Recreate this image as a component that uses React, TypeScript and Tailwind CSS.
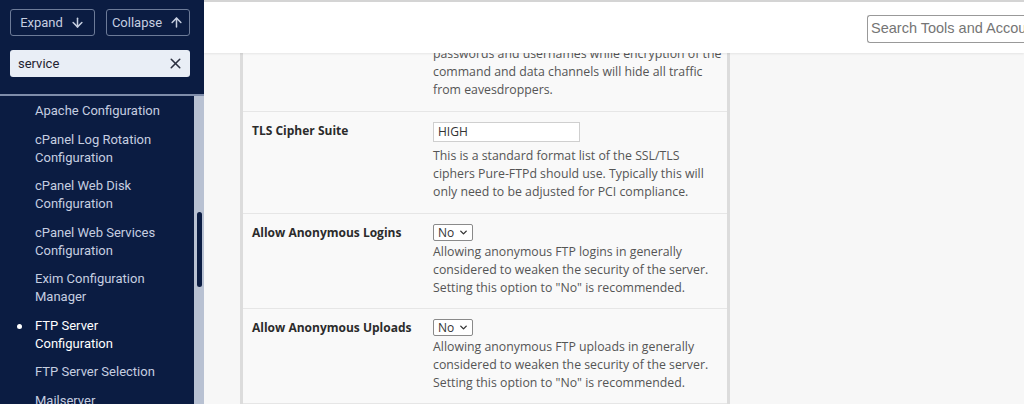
import { ArrowDown, ArrowUp, X, ChevronDown } from 'lucide-react';

const navItems: { lines: string[]; active?: boolean }[] = [
  { lines: ['Apache Configuration'] },
  { lines: ['cPanel Log Rotation', 'Configuration'] },
  { lines: ['cPanel Web Disk', 'Configuration'] },
  { lines: ['cPanel Web Services', 'Configuration'] },
  { lines: ['Exim Configuration', 'Manager'] },
  { lines: ['FTP Server', 'Configuration'], active: true },
  { lines: ['FTP Server Selection'] },
  { lines: ['Mailserver', 'Configuration'] },
];

function Sidebar() {
  return (
    <aside className="w-[204px] h-full flex flex-col bg-[#0b1c42] font-['Roboto',sans-serif] shrink-0">
      {/* Expand / collapse + filter */}
      <div className="h-[96px] border-b-2 border-[#7f8daa] px-[10px] pt-[9px]">
        <div className="flex gap-[11px]">
          <button className="w-[85px] h-[27px] flex items-center justify-center gap-[7px] rounded-[3px] border border-[#6d7b98] text-[13px] text-[#c6cee0]">
            Expand
            <ArrowDown size={15} strokeWidth={2.4} />
          </button>
          <button className="w-[84px] h-[27px] flex items-center justify-center gap-[7px] rounded-[3px] border border-[#6d7b98] text-[13px] text-[#c6cee0]">
            Collapse
            <ArrowUp size={15} strokeWidth={2.4} />
          </button>
        </div>
        <div className="mt-[14px] h-[27px] w-[180px] flex items-center justify-between rounded-[3px] bg-[#e9eef6] pl-[8px] pr-[6px]">
          <span className="text-[13px] text-[#1f2330]">service</span>
          <X size={17} strokeWidth={2.2} className="text-[#2b3040]" />
        </div>
      </div>

      {/* Nav list + scrollbar */}
      <div className="flex-1 flex min-h-0">
        <ul className="flex-1 overflow-hidden pt-[1px]">
          {navItems.map((item) => (
            <li
              key={item.lines.join(' ')}
              className={`relative pl-[35px] py-[5.25px] text-[13px] leading-[18px] ${
                item.active ? 'text-white' : 'text-[#c6cee0]'
              }`}
            >
              {item.active && (
                <span className="absolute left-[17px] top-[12px] w-[5px] h-[5px] rounded-full bg-white" />
              )}
              {item.lines.map((l) => (
                <div key={l}>{l}</div>
              ))}
            </li>
          ))}
        </ul>
        <div className="w-[10px] bg-[#b8c1d2] pt-[116px] flex justify-center">
          <div className="w-[5px] h-[75px] rounded-full bg-[#0b1c42]" />
        </div>
      </div>
    </aside>
  );
}

function Select() {
  return (
    <div className="w-[40px] h-[17px] flex items-center justify-between border border-[#8a8a8a] rounded-[2px] bg-white pl-[4px] pr-[3px] text-[12px] text-[#333]">
      <span>No</span>
      <ChevronDown size={11} strokeWidth={3} className="text-[#333]" />
    </div>
  );
}

function Row({
  label,
  control,
  desc,
  gap = 'mt-[2px]',
  pb = 'pb-[11px]',
}: {
  label?: string;
  control?: React.ReactNode;
  desc: string[];
  gap?: string;
  pb?: string;
}) {
  return (
    <div className={`flex border-b border-[#e6e6e6] pl-[9px] pt-[10px] ${pb}`}>
      <div className="w-[181px] text-[12px] font-bold text-[#2b2b2b] leading-[18px]">{label}</div>
      <div className="flex-1">
        {control}
        <div className={`text-[12.3px] leading-[18px] text-[#555] ${gap}`}>
          {desc.map((d) => (
            <div key={d}>{d}</div>
          ))}
        </div>
      </div>
    </div>
  );
}

export default function App() {
  return (
    <div className="w-[1024px] h-[404px] flex overflow-hidden bg-[#f7f7f7]">
      <Sidebar />
      <div className="flex-1 flex flex-col min-w-0">
        {/* Top header */}
        <header className="relative z-10 h-[53px] shrink-0 bg-white border-t-2 border-[#d4d4d4] shadow-[0_1px_2px_rgba(0,0,0,0.08)] flex items-center justify-end">
          <div className="w-[157px] h-[28px] mt-[2px] border border-[#999] border-r-0 rounded-l-[3px] flex items-center pl-[2px] font-['Liberation_Sans',Arial,sans-serif] text-[14.5px] text-[#757575] whitespace-nowrap overflow-hidden">
            <span className="w-px h-[17px] bg-[#111] mr-[1px]" />
            Search Tools and Accounts
          </div>
        </header>

        {/* Content */}
        <div className="flex-1 overflow-hidden font-['Open_Sans',sans-serif]">
          <div className="ml-[36px] w-[490px] min-h-[420px] -mt-[38px] border-x-[3px] border-[#dcdcdc] bg-[#f9f9f9]">
            <Row
              pb="pb-[12px]"
              desc={[
                'plaintext FTP connections will expose',
                'passwords and usernames while encryption of the',
                'command and data channels will hide all traffic',
                'from eavesdroppers.',
              ]}
            />
            <Row
              label="TLS Cipher Suite"
              gap="mt-[5px]"
              pb="pb-[12px]"
              control={
                <div className="w-[147px] h-[20px] border border-[#cfcfcf] bg-white text-[12px] text-[#333] pl-[4px] leading-[18px]">
                  HIGH
                </div>
              }
              desc={[
                'This is a standard format list of the SSL/TLS',
                'ciphers Pure-FTPd should use. Typically this will',
                'only need to be adjusted for PCI compliance.',
              ]}
            />
            <Row
              label="Allow Anonymous Logins"
              control={<Select />}
              desc={[
                'Allowing anonymous FTP logins in generally',
                'considered to weaken the security of the server.',
                'Setting this option to "No" is recommended.',
              ]}
            />
            <Row
              label="Allow Anonymous Uploads"
              control={<Select />}
              desc={[
                'Allowing anonymous FTP uploads in generally',
                'considered to weaken the security of the server.',
                'Setting this option to "No" is recommended.',
              ]}
            />
          </div>
        </div>
      </div>
    </div>
  );
}
